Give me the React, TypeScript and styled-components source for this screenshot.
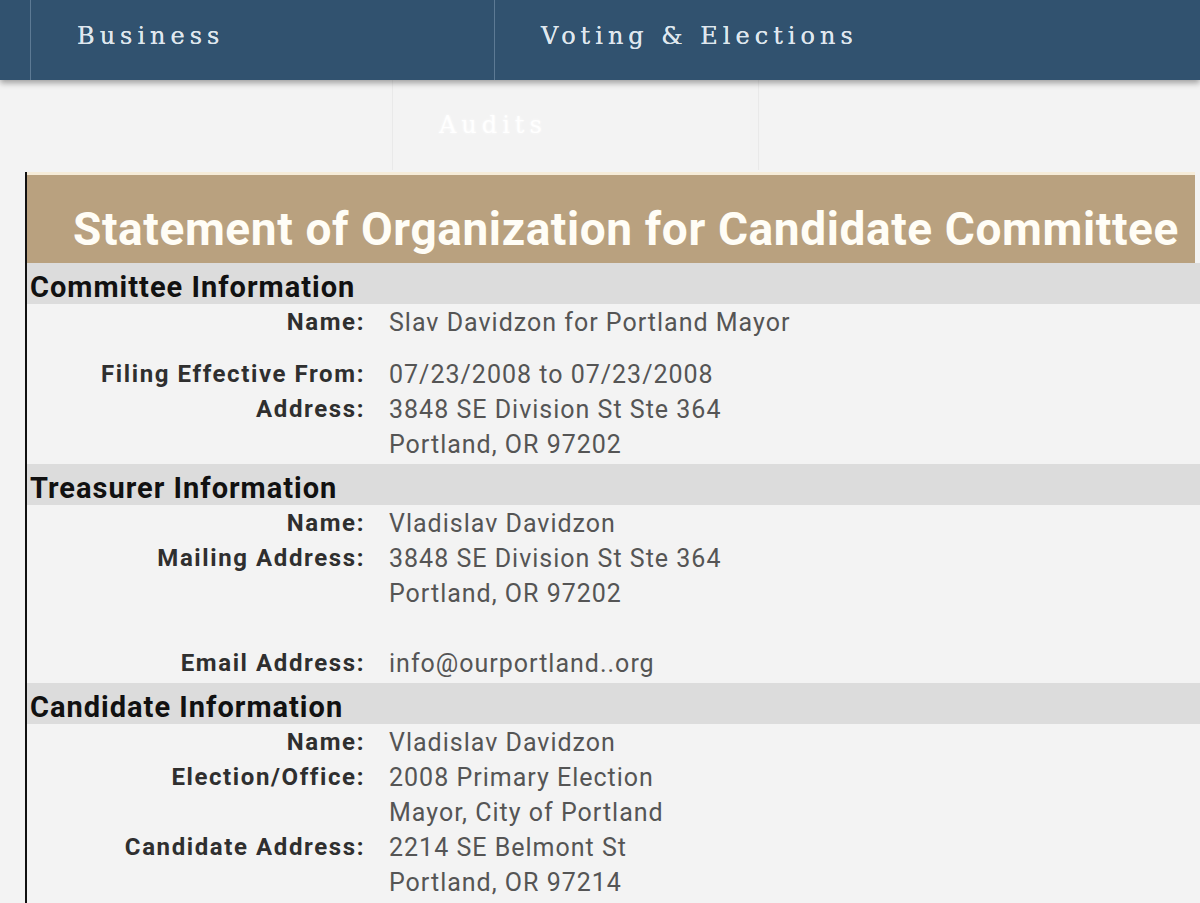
import styled, { createGlobalStyle } from "styled-components";

const GlobalStyle = createGlobalStyle`
  html, body {
    margin: 0;
    padding: 0;
    background: #f3f3f3;
  }
  body {
    font-family: Roboto, "Liberation Sans", sans-serif;
    overflow: hidden;
  }
`;

const TopNav = styled.nav`
  height: 80px;
  background: #31526f;
  display: flex;
  box-shadow: 0 3px 6px rgba(0, 0, 0, 0.35);
  position: relative;
  z-index: 1;
`;

const NavCell = styled.div<{ $width?: number; $light?: boolean }>`
  ${(p) => (p.$width ? `width: ${p.$width}px; flex: none;` : "flex: 1;")}
  box-sizing: border-box;
  border-left: 1px solid ${(p) => (p.$light ? "#e9e9e9" : "#5d7a94")};
  display: flex;
  align-items: center;
  padding-left: 46px;
  font-family: "DejaVu Serif", "Liberation Serif", serif;
  font-size: 24px;
  letter-spacing: 5px;
  color: ${(p) => (p.$light ? "#ffffff" : "#dfe7ee")};
  text-shadow: ${(p) => (p.$light ? "0 0 3px rgba(255,255,255,0.9)" : "0 0 0.4px #dfe7ee")};
  padding-bottom: ${(p) => (p.$light ? "0" : "8px")};
  &:first-child {
    border-left: none;
    padding-left: 0;
  }
`;

const SubNav = styled.div`
  height: 90px;
  display: flex;
`;

const Content = styled.div`
  margin-left: 25px;
  margin-top: 2px;
  border-left: 2px solid #111;
  min-height: 740px;
`;

const TitleBar = styled.h1`
  margin: 0 5px 0 0;
  height: 91px;
  box-sizing: border-box;
  border-top: 3px solid #f6ecd9;
  background: #b9a17f;
  color: #fffdf6;
  font-family: Roboto, "Liberation Sans", sans-serif;
  font-weight: 700;
  font-size: 46px;
  letter-spacing: 0.6px;
  line-height: 84px;
  padding-left: 46px;
  padding-top: 12px;
  white-space: nowrap;
`;

const SectionHeader = styled.div`
  height: 41px;
  background: #dcdcdc;
  color: #111;
  font-weight: 700;
  font-size: 29px;
  letter-spacing: 1px;
  line-height: 30px;
  padding: 9px 0 0 3px;
  box-sizing: border-box;
  margin-right: -5px;
`;

const Rows = styled.div`
  display: grid;
  grid-template-columns: 338px 1fr;
  column-gap: 24px;
  font-size: 25px;
  line-height: 35px;
  padding: 1px 0 2px;
`;

const Label = styled.div<{ $gapAfter?: number }>`
  text-align: right;
  font-weight: 700;
  color: #2f2f2f;
  font-size: 24px;
  letter-spacing: 1.6px;
  margin-bottom: ${(p) => p.$gapAfter ?? 0}px;
`;

const Value = styled.div<{ $gapAfter?: number }>`
  color: #555;
  letter-spacing: 1px;
  margin-bottom: ${(p) => p.$gapAfter ?? 0}px;
  white-space: nowrap;
`;

type Field = { label: string; lines: string[]; gapAfter?: number };

type Section = { title: string; fields: Field[] };

const sections: Section[] = [
  {
    title: "Committee Information",
    fields: [
      { label: "Name:", lines: ["Slav Davidzon for Portland Mayor"], gapAfter: 17 },
      { label: "Filing Effective From:", lines: ["07/23/2008 to 07/23/2008"] },
      { label: "Address:", lines: ["3848 SE Division St Ste 364", "Portland, OR 97202"] },
    ],
  },
  {
    title: "Treasurer Information",
    fields: [
      { label: "Name:", lines: ["Vladislav Davidzon"] },
      { label: "Mailing Address:", lines: ["3848 SE Division St Ste 364", "Portland, OR 97202", "\u00a0"] },
      { label: "Email Address:", lines: ["info@ourportland..org"] },
    ],
  },
  {
    title: "Candidate Information",
    fields: [
      { label: "Name:", lines: ["Vladislav Davidzon"] },
      { label: "Election/Office:", lines: ["2008 Primary Election", "Mayor, City of Portland"] },
      { label: "Candidate Address:", lines: ["2214 SE Belmont St", "Portland, OR 97214"] },
    ],
  },
];

function App() {
  return (
    <>
      <GlobalStyle />
      <TopNav>
        <NavCell $width={30} />
        <NavCell $width={464}>Business</NavCell>
        <NavCell>Voting &amp; Elections</NavCell>
      </TopNav>
      <SubNav>
        <NavCell $width={392} $light />
        <NavCell $width={366} $light>Audits</NavCell>
        <NavCell $light />
      </SubNav>
      <Content>
        <TitleBar>Statement of Organization for Candidate Committee</TitleBar>
        {sections.map((section) => (
          <div key={section.title}>
            <SectionHeader>{section.title}</SectionHeader>
            <Rows>
              {section.fields.map((field) => (
                <>
                  <Label key={field.label + "l"} $gapAfter={field.gapAfter}>
                    {field.label}
                  </Label>
                  <Value key={field.label + "v"} $gapAfter={field.gapAfter}>
                    {field.lines.map((line, i) => (
                      <div key={i}>{line}</div>
                    ))}
                  </Value>
                </>
              ))}
            </Rows>
          </div>
        ))}
      </Content>
    </>
  );
}

export default App;
